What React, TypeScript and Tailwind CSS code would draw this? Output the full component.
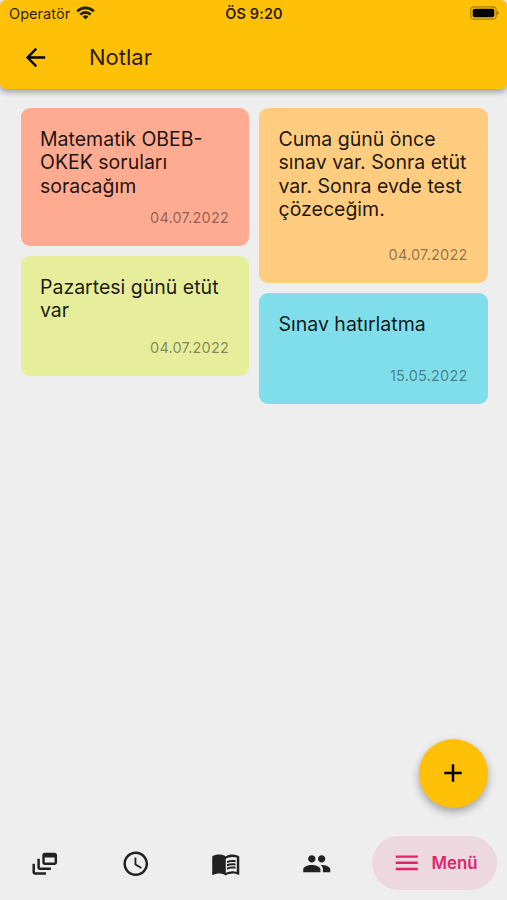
import {
  MdAccessTime,
  MdAdd,
  MdArrowBack,
  MdDynamicFeed,
  MdMenu,
  MdMenuBook,
  MdPeople,
} from 'react-icons/md';

interface Note {
  lines: string[];
  date: string;
  className: string;
}

const leftNotes: Note[] = [
  { lines: ['Matematik OBEB-', 'OKEK soruları', 'soracağım'], date: '04.07.2022', className: 'h-[138px] bg-[#ffab91]' },
  { lines: ['Pazartesi günü etüt', 'var'], date: '04.07.2022', className: 'h-[120px] bg-[#e6ee9c]' },
];

const rightNotes: Note[] = [
  {
    lines: ['Cuma günü önce', 'sınav var. Sonra etüt', 'var. Sonra evde test', 'çözeceğim.'],
    date: '04.07.2022',
    className: 'h-[175px] bg-[#ffcc80]',
  },
  { lines: ['Sınav hatırlatma'], date: '15.05.2022', className: 'h-[111px] bg-[#80deea]' },
];

const navItems = [
  { id: 'feed', label: 'Akış', icon: MdDynamicFeed },
  { id: 'time', label: 'Süre', icon: MdAccessTime },
  { id: 'lessons', label: 'Dersler', icon: MdMenuBook },
  { id: 'people', label: 'Kişiler', icon: MdPeople },
];

function NoteCard({ note }: { note: Note }) {
  return (
    <div className={`flex flex-col justify-between rounded-[9px] pt-5 pr-5 pb-[19px] pl-[19.5px] ${note.className}`}>
      <div className="text-[19.5px] leading-[23.3px] whitespace-nowrap text-black/90">
        {note.lines.map((line) => (
          <div key={line}>{line}</div>
        ))}
      </div>
      <div className="text-right text-[14.5px] leading-[18px] tracking-[0.2px] text-black/45">{note.date}</div>
    </div>
  );
}

function StatusBar() {
  return (
    <div className="grid h-[27px] grid-cols-3 items-center pr-[8px] pl-[9px] text-[14.5px] text-black/85">
      <div className="flex items-center gap-[6px]">
        <span className="tracking-[0.05px]">Operatör</span>
        <svg className="-mt-px" width="19" height="14" viewBox="0 0 19 14" fill="none" stroke="currentColor" strokeWidth="2.7">
          <path d="M1.2 5.2a11.8 11.8 0 0 1 16.6 0" />
          <path d="M4.3 8.6a7.4 7.4 0 0 1 10.4 0" />
          <path d="M9.5 13.5 6.6 10.6a4.1 4.1 0 0 1 5.8 0z" fill="currentColor" stroke="none" />
        </svg>
      </div>
      <span className="text-center font-semibold tracking-[0.1px]">ÖS 9:20</span>
      <svg className="-mt-px justify-self-end" width="30" height="14" viewBox="0 0 30 14">
        <rect x="1.8" y="0.8" width="25.4" height="12.4" rx="3.5" fill="none" stroke="#000" strokeOpacity="0.35" strokeWidth="1.2" />
        <rect x="3.7" y="2.7" width="21.6" height="8.6" rx="1.8" fill="#000" />
        <path d="M28.2 5v4c1-.4 1.6-1.1 1.6-2s-.6-1.6-1.6-2z" fill="#000" fillOpacity="0.4" />
      </svg>
    </div>
  );
}

export default function App() {
  return (
    <div className="relative flex h-[900px] w-[507px] flex-col overflow-hidden bg-[#eeeeee] font-['Inter','Liberation_Sans',sans-serif]">
      <header className="h-[89px] shrink-0 rounded-[6px] bg-[#ffc107] shadow-[0_3px_6px_rgba(0,0,0,0.35)]">
        <StatusBar />
        <div className="flex h-[60px] items-center pl-[20.5px]">
          <button aria-label="Geri">
            <MdArrowBack className="size-[29px] text-black" />
          </button>
          <h1 className="ml-[39.5px] pt-px text-[22px] text-black/87">Notlar</h1>
        </div>
      </header>

      {/* Notes */}
      <main className="grid grid-cols-2 gap-[10px] pt-[19px] pr-[19.5px] pl-[20.5px]">
        <div className="flex flex-col gap-[10px]">
          {leftNotes.map((note) => (
            <NoteCard key={note.lines[0]} note={note} />
          ))}
        </div>
        <div className="flex flex-col gap-[10px]">
          {rightNotes.map((note) => (
            <NoteCard key={note.lines[0]} note={note} />
          ))}
        </div>
      </main>

      <button
        aria-label="Not ekle"
        className="absolute right-[19.5px] bottom-[92.5px] flex size-[68.5px] items-center justify-center rounded-full bg-[#ffc107] shadow-[0_4px_8px_rgba(0,0,0,0.32)]"
      >
        <MdAdd className="size-[30px] text-black" />
      </button>

      {/* Bottom nav */}
      <nav className="mt-auto flex h-[74px] items-center pl-[30px]">
        <div className="flex gap-[61px] pt-px">
          {navItems.map(({ id, label, icon: Icon }) => (
            <button key={id} aria-label={label}>
              <Icon className="size-[29.5px] text-[#212121]" />
            </button>
          ))}
        </div>
        <button className="mr-[10px] ml-auto flex h-[54px] w-[125px] items-center rounded-full bg-[#eed8df] pl-[20px] text-[#e0246a]">
          <MdMenu className="size-[29.5px]" />
          <span className="ml-[10px] pt-px text-[16.8px] font-semibold">Menü</span>
        </button>
      </nav>
    </div>
  );
}
